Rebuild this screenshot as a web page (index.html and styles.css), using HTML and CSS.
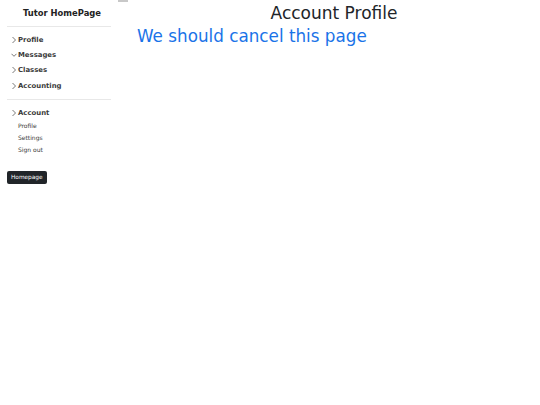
FILE: index.html
```html
<!DOCTYPE html>
<html lang="en">
<head>
    <meta charset="UTF-8">
    <meta name="viewport" content="width=device-width, initial-scale=1.0">
    <title>Account Profile</title>
    <link rel="stylesheet" href="styles.css">
</head>
<body>
    <div class="sidebar">
        <div class="brand">Tutor HomePage</div>
        <ul class="menu">
            <li class="menu-item"><svg class="chev" viewBox="0 0 6 8"><path d="M1.5 1 L4.5 4 L1.5 7"/></svg>Profile</li>
            <li class="menu-item"><svg class="chev" viewBox="0 0 6 8"><path d="M0.5 2.8 L3 5.3 L5.5 2.8"/></svg>Messages</li>
            <li class="menu-item"><svg class="chev" viewBox="0 0 6 8"><path d="M1.5 1 L4.5 4 L1.5 7"/></svg>Classes</li>
            <li class="menu-item"><svg class="chev" viewBox="0 0 6 8"><path d="M1.5 1 L4.5 4 L1.5 7"/></svg>Accounting</li>
        </ul>
        <ul class="menu account">
            <li class="menu-item"><svg class="chev" viewBox="0 0 6 8"><path d="M1.5 1 L4.5 4 L1.5 7"/></svg>Account</li>
            <li class="sub-item">Profile</li>
            <li class="sub-item">Settings</li>
            <li class="sub-item">Sign out</li>
        </ul>
        <button class="home-btn">Homepage</button>
    </div>
    <div class="toggler"></div>
    <div class="main">
        <h1 class="title">Account Profile</h1>
        <p class="notice">We should cancel this page</p>
    </div>
</body>
</html>
```

FILE: styles.css
```css
body {
    font-family: 'DejaVu Sans', sans-serif;
    margin: 0;
    display: flex;
    align-items: flex-start;
    background-color: #ffffff;
    color: #212529;
}
.sidebar {
    width: 104px;
    padding: 0 7px;
    flex-shrink: 0;
}
.brand {
    font-size: 8.4px;
    font-weight: bold;
    color: #222;
    text-align: center;
    padding: 8px 0 8px 6px;
    border-bottom: 1px solid #e8e8e8;
}
.menu {
    list-style: none;
    margin: 0;
    padding: 5px 0 6px;
    border-bottom: 1px solid #e8e8e8;
}
.menu.account {
    border-bottom: none;
    padding-top: 5px;
}
.menu-item {
    font-size: 6.9px;
    font-weight: bold;
    color: #3a3a3a;
    height: 15.3px;
    display: flex;
    align-items: center;
}
.chev {
    width: 6px;
    height: 8px;
    margin-left: 4px;
    margin-right: 1px;
    fill: none;
    stroke: #555;
    stroke-width: 0.8;
}
.sub-item {
    font-size: 6px;
    color: #3a3a3a;
    padding-left: 11px;
    height: 12px;
    line-height: 12px;
}
.home-btn {
    display: block;
    margin-top: 9px;
    font-family: 'DejaVu Sans', sans-serif;
    font-size: 5.8px;
    color: #ffffff;
    background-color: #212529;
    border: none;
    border-radius: 2px;
    padding: 3px 4px 4px;
}
.toggler {
    width: 10px;
    height: 2px;
    background-color: #c8c8c8;
    flex-shrink: 0;
}
.main {
    flex-grow: 1;
}
.title {
    font-size: 17px;
    font-weight: normal;
    text-align: center;
    margin: 3px 0 0;
    line-height: 20px;
}
.notice {
    font-size: 16.8px;
    color: #1a73e8;
    margin: 1px 0 0 9px;
    line-height: 24px;
}
```
